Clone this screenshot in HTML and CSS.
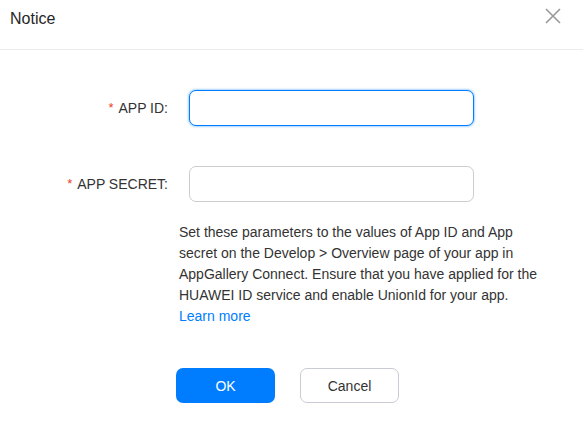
FILE: index.html
```html
<!DOCTYPE html>
<html>
<head>
<meta charset="utf-8">
<link rel="stylesheet" href="styles.css">
</head>
<body>
<div class="dialog">
  <div class="header">
    <span class="title">Notice</span>
    <button class="close" aria-label="Close">
      <svg width="16" height="16" viewBox="0 0 16 16"><path d="M1 1 L15 15 M15 1 L1 15" stroke="#999" stroke-width="1.6" fill="none"/></svg>
    </button>
  </div>
  <div class="body">
    <div class="row">
      <label class="label"><span class="req">*</span>APP ID:</label>
      <input class="input focused" type="text">
    </div>
    <div class="row">
      <label class="label"><span class="req">*</span>APP SECRET:</label>
      <input class="input" type="text">
    </div>
    <p class="desc">Set these parameters to the values of App ID and App secret on the Develop &gt; Overview page of your app in AppGallery Connect. Ensure that you have applied for the HUAWEI ID service and enable UnionId for your app.<br><a class="link" href="#">Learn more</a></p>
    <div class="actions">
      <button class="btn primary">OK</button>
      <button class="btn secondary">Cancel</button>
    </div>
  </div>
</div>
</body>
</html>
```
FILE: styles.css
```css
* { box-sizing: border-box; }
html, body { margin: 0; padding: 0; background: #fff; }
body { font-family: "Liberation Sans", Arial, sans-serif; color: #333; }
.dialog { width: 583px; height: 432px; }
.header {
  height: 50px;
  border-bottom: 1px solid #ececec;
  display: flex;
  align-items: center;
  justify-content: space-between;
  padding: 0 22px 0 10px;
}
.title { font-size: 16px; color: #262626; margin-top: -11px; }
.close {
  border: 0; background: none; padding: 0; width: 16px; height: 16px;
  margin-top: -17px; cursor: pointer; display: flex;
}
.body { padding-top: 40px; }
.row { display: flex; align-items: center; margin-bottom: 40px; }
.row:nth-of-type(2) { margin-bottom: 0; }
.label {
  width: 169px;
  text-align: right;
  font-size: 14px;
  color: #333;
  padding-right: 1px;
}
.req { color: #e84026; font-size: 13px; margin-right: 5px; position: relative; top: -1px; }
.input {
  margin-left: 20px;
  width: 285px;
  height: 36px;
  border: 1px solid #ccc;
  border-radius: 7px;
  outline: none;
  font: inherit;
}
.input.focused {
  border-color: #007dff;
  box-shadow: 0 0 2px 1px rgba(0,125,255,0.35);
}
.desc {
  margin: 20px 0 0 179px;
  width: 362px;
  font-size: 14px;
  line-height: 21px;
  color: #333;
}
.link { color: #007dff; text-decoration: none; }
.actions { display: flex; gap: 25px; margin: 41px 0 0 176px; }
.btn {
  width: 99px;
  height: 35px;
  border-radius: 7px;
  font-family: inherit;
  font-size: 14px;
  cursor: pointer;
}
.primary { background: #007dff; color: #fff; border: 0; }
.secondary { background: #fff; color: #333; border: 1px solid #c9ccd4; }
```
